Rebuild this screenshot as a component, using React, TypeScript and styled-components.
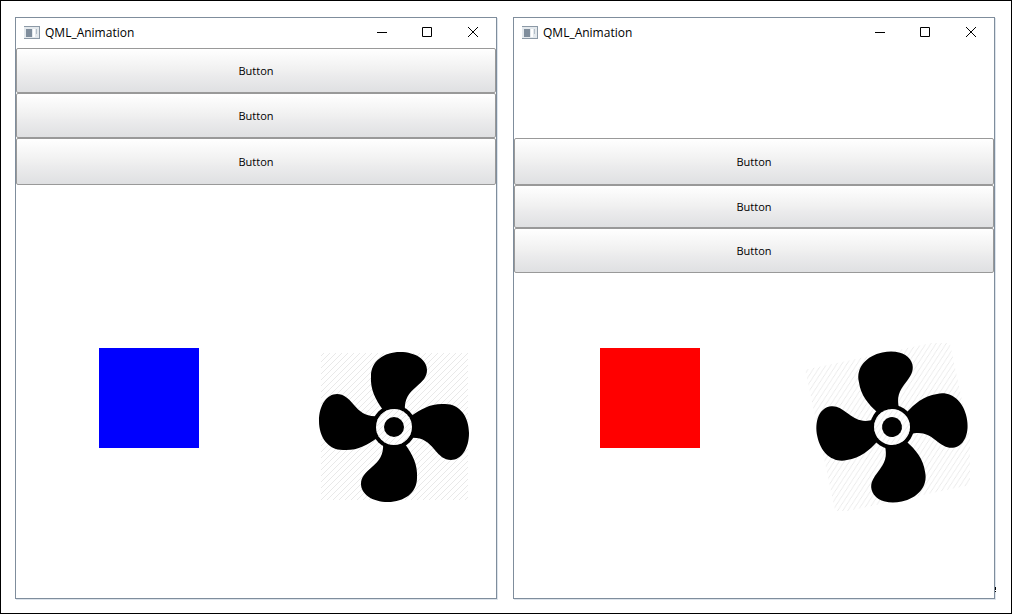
import React from "react";
import styled, { createGlobalStyle } from "styled-components";

const GlobalStyle = createGlobalStyle`
  *, *::before, *::after { box-sizing: border-box; }
  body {
    margin: 0;
    background: #fff;
    color: #000;
    font-family: "Open Sans", "Noto Sans", sans-serif;
  }
`;

const Desktop = styled.main`
  min-height: 100vh;
  display: grid;
  grid-template-columns: 1fr 1fr;
  gap: 16px;
  padding: 16px 16px 14px 14px;
  border: 1px solid #000;
`;

const Window = styled.section`
  position: relative;
  display: flex;
  flex-direction: column;
  min-width: 0;
  border: 1px solid #7f8d9c;
  box-shadow: 1px 1px 0 #dde4ec;
`;

const TitleBar = styled.header`
  display: flex;
  align-items: center;
  height: 30px;
  padding-left: 8px;
`;

const Title = styled.h1`
  flex: 1;
  margin: 0 0 0 5px;
  font-size: 12px;
  line-height: 16px;
  font-weight: 400;
`;

const CaptionButton = styled.button`
  display: flex;
  align-items: center;
  justify-content: center;
  width: 46px;
  height: 30px;
  padding: 0;
  border: 0;
  background: transparent;
`;

const ButtonStack = styled.div<{ $offset: number }>`
  display: flex;
  flex-direction: column;
  padding-top: ${(p) => p.$offset}px;
`;

const PushButton = styled.button<{ $height?: number }>`
  height: ${(p) => p.$height ?? 45}px;
  padding: 0;
  border: 1px solid #999;
  border-radius: 2px;
  background: linear-gradient(#fff 0%, #f0f0f0 50%, #ececed 60%, #dfe0e2 100%);
  color: #000;
  font-family: inherit;
  font-size: 11px;
  line-height: 16px;
`;

const Scene = styled.div<{ $inset: number }>`
  flex: 1;
  display: flex;
  align-items: flex-end;
  justify-content: space-between;
  padding: 0 12px 81px ${(p) => p.$inset}px;
`;

const Square = styled.div<{ $color: string }>`
  width: 100px;
  height: 100px;
  margin-bottom: 69px;
  background: ${(p) => p.$color};
`;

const EdgeMark = styled.span`
  position: absolute;
  right: -2px;
  bottom: 6px;
  width: 1px;
  height: 5px;
  background: linear-gradient(#000 60%, #fff 60% 80%, #000 80%);
`;

const BLADE =
  "M-11 -17 C-18 -27 -24 -37 -23 -51 C-23 -66 -10 -75 6 -75 C22 -75 33 -67 33 -57 C33 -50 29 -46 22 -40 C15 -34 10 -28 11 -16 Z";

function Fan({ id, angle }: { id: string; angle: number }) {
  return (
    <svg width="180" height="180" viewBox="-90 -90 180 180" role="img" aria-label="Fan">
      <defs>
        <pattern id={id} width="6" height="6" patternUnits="userSpaceOnUse">
          <path d="M-1 7 L7 -1 M-1 1 L1 -1 M5 7 L7 5" stroke="#e9e9e9" strokeWidth="1" />
        </pattern>
        <clipPath id={`${id}-clip`}>
          <rect x="-90" y="-84" width="168" height="168" />
        </clipPath>
      </defs>
      <g clipPath={`url(#${id}-clip)`}>
        <g transform={`rotate(${angle})`}>
          <rect x="-73" y="-74" width="147" height="147" fill={`url(#${id})`} />
          {[0, 90, 180, 270].map((turn) => (
            <path key={turn} d={BLADE} transform={`rotate(${turn})`} />
          ))}
          <circle r="22" />
          <circle r="18" fill="#fff" />
          <circle r="18" fill={`url(#${id})`} />
          <circle r="10" />
        </g>
      </g>
    </svg>
  );
}

function AppIcon() {
  return (
    <svg width="16" height="14" viewBox="0 0 16 14" shapeRendering="crispEdges" aria-hidden="true">
      <rect width="16" height="13" fill="#e4e9ed" />
      <path d="M0 0H16V1H0ZM0 12H16V13H0ZM15 0H16V13H15Z" fill="#8c99a6" />
      <rect x="2" y="3" width="6" height="8" fill="#7f8d9c" />
      <rect x="9" y="3" width="2" height="8" fill="#fff" />
      <rect x="12" y="3" width="1" height="5" fill="#b4bec8" />
    </svg>
  );
}

function Caption({ label, d }: { label: string; d: string }) {
  return (
    <CaptionButton type="button" aria-label={label}>
      <svg width="12" height="12" viewBox="0 0 12 12" fill="none" stroke="#000">
        <path d={d} />
      </svg>
    </CaptionButton>
  );
}

function WindowHeader() {
  return (
    <TitleBar>
      <AppIcon />
      <Title>QML_Animation</Title>
      <Caption label="Minimize" d="M2 5.5H12" />
      <Caption label="Maximize" d="M1.5 0.5H10.5V9.5H1.5Z" />
      <Caption label="Close" d="M1 0L11 10M11 0L1 10" />
    </TitleBar>
  );
}

export default function App() {
  return (
    <>
      <GlobalStyle />
      <Desktop>
        <Window>
          <WindowHeader />
          <ButtonStack $offset={0}>
            <PushButton type="button">Button</PushButton>
            <PushButton type="button">Button</PushButton>
            <PushButton type="button" $height={47}>Button</PushButton>
          </ButtonStack>
          <Scene $inset={83}>
            <Square $color="#00f" />
            <Fan id="hatch-left" angle={0} />
          </Scene>
        </Window>
        <Window>
          <WindowHeader />
          <ButtonStack $offset={90}>
            <PushButton type="button" $height={47}>Button</PushButton>
            <PushButton type="button" $height={43}>Button</PushButton>
            <PushButton type="button">Button</PushButton>
          </ButtonStack>
          <Scene $inset={86}>
            <Square $color="#f00" />
            <Fan id="hatch-right" angle={-12} />
          </Scene>
          <EdgeMark />
        </Window>
      </Desktop>
    </>
  );
}
